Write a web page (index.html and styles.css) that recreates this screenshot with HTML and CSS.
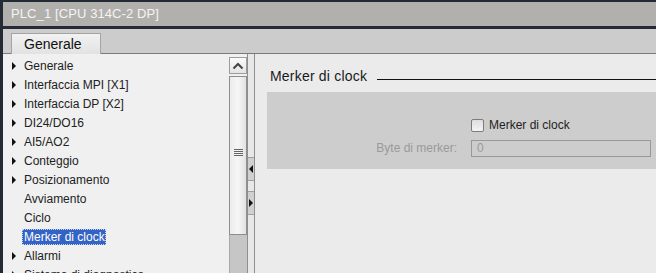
FILE: index.html
```
<!DOCTYPE html>
<html lang="it">
<head>
  <meta charset="UTF-8">
  <title>PLC_1 [CPU 314C-2 DP]</title>
  <link rel="stylesheet" href="styles.css">
</head>
<body>
  <div id="window">
    <div id="titlebar">PLC_1 [CPU 314C-2 DP]</div>

    <div id="tabs">
      <div class="tab">Generale</div>
    </div>

    <div id="main">
      <div id="tree">
        <div class="node"><span class="arrow"></span>Generale</div>
        <div class="node"><span class="arrow"></span>Interfaccia MPI [X1]</div>
        <div class="node"><span class="arrow"></span>Interfaccia DP [X2]</div>
        <div class="node"><span class="arrow"></span>DI24/DO16</div>
        <div class="node"><span class="arrow"></span>AI5/AO2</div>
        <div class="node"><span class="arrow"></span>Conteggio</div>
        <div class="node"><span class="arrow"></span>Posizionamento</div>
        <div class="node"><span class="leaf"></span>Avviamento</div>
        <div class="node"><span class="leaf"></span>Ciclo</div>
        <div class="node"><span class="leaf"></span><span class="selected">Merker di clock</span></div>
        <div class="node"><span class="arrow"></span>Allarmi</div>
        <div class="node"><span class="arrow"></span>Sistema di diagnostica</div>
      </div>

      <div id="scrollbar">
        <div class="sb-up">
          <svg width="12" height="8" viewBox="0 0 12 8"><path d="M1.5 6.5 L6 2 L10.5 6.5" fill="none" stroke="#444" stroke-width="2"/></svg>
        </div>
        <div class="sb-thumb">
          <div class="grip"></div>
        </div>
        <div class="sb-track"></div>
      </div>

      <div id="splitter">
        <div class="split-btn"><span class="tri-left"></span></div>
        <div class="split-btn"><span class="tri-right"></span></div>
      </div>

      <div id="content">
        <div class="section-title">
          <span>Merker di clock</span>
          <div class="rule"></div>
        </div>
        <div class="group">
          <div class="row">
            <span class="label"></span>
            <label class="check"><span class="box"></span>Merker di clock</label>
          </div>
          <div class="row">
            <span class="label disabled">Byte di merker:</span>
            <div class="field">0</div>
          </div>
        </div>
      </div>
    </div>
  </div>
</body>
</html>
```

FILE: styles.css
```
body{
  margin: 0px;
  padding: 0px;
  background: #252b36;
  font-family: "Liberation Sans", Arial, sans-serif;
  overflow: hidden;
  height: 273px;
}

#window{
  padding: 2px 0px 0px 3px;
  height: 100%;
  box-sizing: border-box;
  display: flex;
  flex-direction: column;
}

#titlebar{
  height: 24px;
  background: #b2b0ad;
  color: #f4f4f4;
  font-size: 13px;
  line-height: 24px;
  padding-left: 8px;
  letter-spacing: 0.1px;
  flex-shrink: 0;
}

#tabs{
  margin-top: 3px;
  height: 24px;
  background: #cccccc;
  border-bottom: 1px solid #7a7a7a;
  display: flex;
  align-items: flex-end;
  padding-left: 8px;
  flex-shrink: 0;
}
.tab{
  width: 90px;
  height: 21px;
  box-sizing: border-box;
  border: 1px solid #a4a4a4;
  border-bottom: none;
  background: linear-gradient(#f2f2f2, #e2e2e2);
  color: #111;
  font-size: 14px;
  line-height: 21px;
  padding-left: 12px;
  margin-bottom: -1px;
}

#main{
  flex: 1;
  display: flex;
  background: #ebebeb;
  overflow: hidden;
}

#tree{
  width: 226px;
  flex-shrink: 0;
  padding-top: 2px;
  background: #f0f0f0;
}
.node{
  height: 19px;
  display: flex;
  align-items: center;
  font-size: 12px;
  color: #222;
  white-space: nowrap;
}
.arrow, .leaf{
  width: 0px;
  height: 0px;
  margin: 0px 8px 0px 9px;
}
.arrow{
  border-top: 4px solid transparent;
  border-bottom: 4px solid transparent;
  border-left: 4px solid #111;
}
.leaf{
  border-left: 4px solid transparent;
}
.selected{
  background: #3363c4;
  color: white;
  outline: 1px dotted #c8d4f0;
  outline-offset: -1px;
  padding: 1px 1px 1px 2px;
  margin-left: -2px;
}

#scrollbar{
  width: 18px;
  flex-shrink: 0;
  background: #f0f0f0;
  display: flex;
  flex-direction: column;
  padding-top: 3px;
}
.sb-up{
  height: 17px;
  box-sizing: border-box;
  border: 1px solid #9c9c9c;
  background: linear-gradient(#fafafa, #e4e4e4);
  display: flex;
  align-items: center;
  justify-content: center;
}
.sb-thumb{
  margin-top: 2px;
  height: 159px;
  box-sizing: border-box;
  border: 1px solid #8e8e8e;
  background: linear-gradient(90deg, #ececec, #f6f6f6 50%, #e2e2e2);
  position: relative;
}
.grip{
  position: absolute;
  left: 4px;
  top: 72px;
  width: 9px;
  height: 7px;
  background: repeating-linear-gradient(#666 0px, #666 1px, transparent 1px, transparent 2px);
}
.sb-track{
  flex: 1;
  background: #c6c6c6;
  border-left: 1px solid #a8a8a8;
}

#splitter{
  width: 8px;
  flex-shrink: 0;
  box-sizing: border-box;
  border-left: 1px solid #8e8e8e;
  border-right: 1px solid #8e8e8e;
  background: #e8e8e8;
  padding-top: 103px;
}
.split-btn{
  height: 22px;
  border-top: 1px solid #a0a0a0;
  border-bottom: 1px solid #a0a0a0;
  background: #d0d0d0;
  display: flex;
  align-items: center;
  margin-bottom: 10px;
}
.tri-left{
  width: 0px;
  height: 0px;
  border-top: 4px solid transparent;
  border-bottom: 4px solid transparent;
  border-right: 4px solid #111;
  margin-left: 1px;
}
.tri-right{
  width: 0px;
  height: 0px;
  border-top: 4px solid transparent;
  border-bottom: 4px solid transparent;
  border-left: 4px solid #111;
  margin-left: 1px;
}

#content{
  flex: 1;
  padding: 14px 0px 0px 12px;
}
.section-title{
  display: flex;
  align-items: center;
  font-size: 14px;
  letter-spacing: 0.2px;
  color: #1a1a1a;
  padding-left: 3px;
  height: 16px;
}
.rule{
  flex: 1;
  height: 1px;
  background: #111;
  margin: 6px 0px 0px 10px;
}
.group{
  margin-top: 8px;
  height: 77px;
  background: #cdcdcd;
  padding-top: 24px;
  box-sizing: border-box;
}
.row{
  display: flex;
  align-items: center;
  height: 18px;
  margin-bottom: 5px;
}
.label{
  width: 204px;
  flex-shrink: 0;
  font-size: 12px;
  text-align: right;
  padding-right: 14px;
  box-sizing: border-box;
}
.disabled{
  color: #9a9a9a;
}
.check{
  display: flex;
  align-items: center;
  font-size: 12px;
  color: #222;
}
.box{
  width: 13px;
  height: 13px;
  box-sizing: border-box;
  border: 1px solid #7c7c7c;
  border-radius: 2px;
  background: linear-gradient(#dedede, #f4f4f4);
  margin-right: 5px;
}
.field{
  width: 180px;
  height: 17px;
  box-sizing: border-box;
  border: 1px solid #999;
  font-size: 12px;
  color: #9a9a9a;
  line-height: 15px;
  padding-left: 5px;
}
```
